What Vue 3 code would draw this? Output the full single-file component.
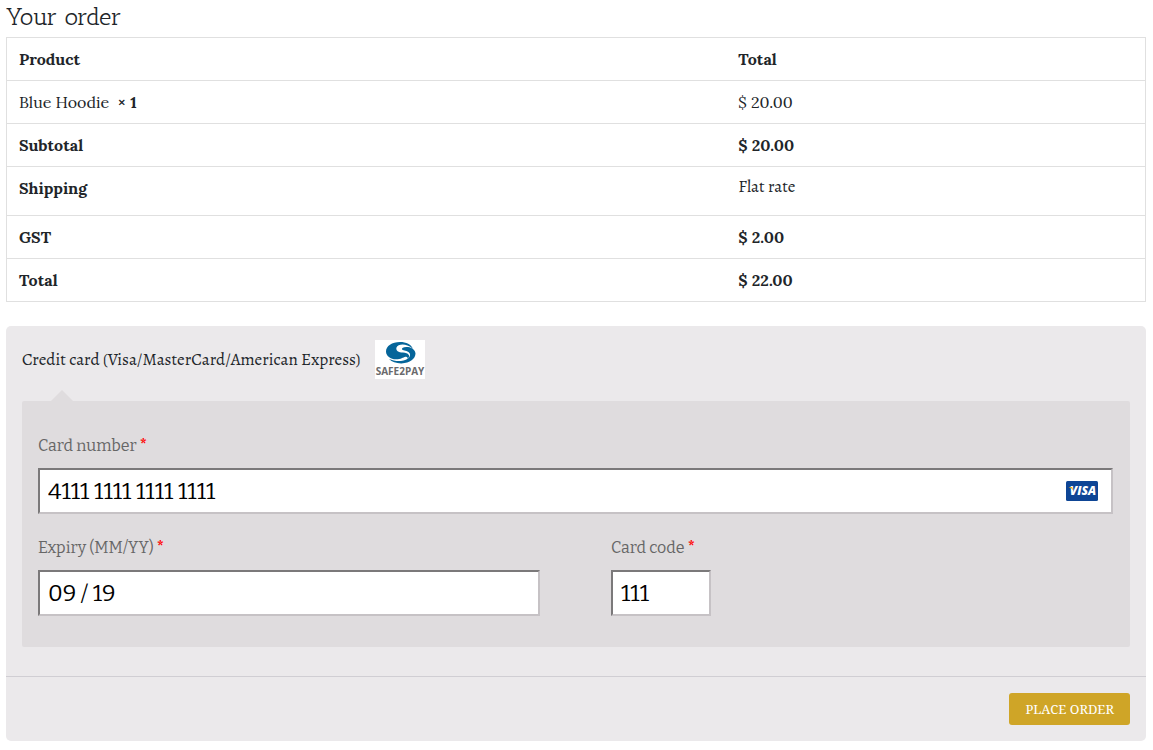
<script setup>
import { ref } from 'vue'

const rows = [
  { label: 'Subtotal', value: '$ 20.00' },
  { label: 'Shipping', value: 'Flat rate', kind: 'shipping' },
  { label: 'GST', value: '$ 2.00' },
  { label: 'Total', value: '$ 22.00' },
]

const cardNumber = ref('4111 1111 1111 1111')
const expiry = ref('09 / 19')
const cardCode = ref('111')
</script>

<template>
  <main class="checkout">
    <h1 class="title">Your order</h1>

    <table class="order">
      <thead>
        <tr>
          <th class="name" scope="col">Product</th>
          <th scope="col">Total</th>
        </tr>
      </thead>
      <tbody>
        <tr>
          <td>Blue Hoodie&nbsp; <strong>×&nbsp;1</strong></td>
          <td>$ 20.00</td>
        </tr>
      </tbody>
      <tfoot>
        <tr v-for="row in rows" :key="row.label" :class="row.kind">
          <th scope="row">{{ row.label }}</th>
          <td>{{ row.value }}</td>
        </tr>
      </tfoot>
    </table>

    <form class="payment" @submit.prevent>
      <div class="method">
        <span>Credit card (Visa/MasterCard/American Express)</span>
        <svg class="safe" viewBox="0 0 50 39" role="img" aria-label="Safe2Pay">
          <rect width="50" height="39" fill="#fff" />
          <path d="M38 9C36.500 4.500 31 2 25 2C17 2 11 6 11 11.500C11 16 15.500 19.300 21 19.300C26 19.300 28 17.500 30.500 16.800C32 16.500 33 17.500 32.500 19C36 16 33.500 12.800 28 12.600C23.500 12.500 20.500 10.500 21.500 7.500C22.500 4.500 28 3.500 32.500 5.500C35 6.500 36.500 7.500 38 9Z" fill="#05659a" />
          <path d="M14 19C17 22 21.500 23.500 26.500 23.400C35 23.200 40.500 18.500 40.500 13.500C40.500 10.500 37 7.500 33 7C29 6.500 26.500 7.700 27 9.200C27.500 10.500 31 10.300 33.500 12C37.500 15 33.500 20.500 26 21C21.500 21.300 17.500 20.500 14 19Z" fill="#05659a" />
          <text class="safe-text" x="25" y="35" text-anchor="middle">SAFE2PAY</text>
        </svg>
      </div>

      <div class="card-box">
        <div class="field">
          <label for="number">Card number <b>*</b></label>
          <div class="number-wrap">
            <input id="number" v-model="cardNumber" type="text" inputmode="numeric" />
            <svg class="visa" viewBox="0 0 32 20" role="img" aria-label="Visa">
              <rect width="32" height="20" rx="1.5" fill="#0e4595" />
              <text class="visa-text" x="17" y="14" text-anchor="middle">VISA</text>
              <path d="M2.500 6H6L7.500 9.500Q6 7 2.500 6Z" fill="#f2ae14" />
            </svg>
          </div>
        </div>
        <div class="pair">
          <div class="field">
            <label for="expiry">Expiry (MM/YY) <b>*</b></label>
            <input id="expiry" v-model="expiry" type="text" />
          </div>
          <div class="field">
            <label for="code">Card code <b>*</b></label>
            <input id="code" v-model="cardCode" class="code" type="text" />
          </div>
        </div>
      </div>

      <div class="actions">
        <button type="submit">PLACE ORDER</button>
      </div>
    </form>
  </main>
</template>

<style>
body {
  margin: 0;
  background: #fff;
}
</style>

<style scoped>
* {
  box-sizing: border-box;
}
.checkout {
  padding: 5px 7px 9px 6px;
  font-family: Lora, "Liberation Serif", serif;
  font-size: 16px;
  line-height: 24px;
  color: #212529;
}
.title {
  margin: 0 0 8px;
  font-family: "Antic Slab", "DejaVu Serif", serif;
  font-size: 24px;
  line-height: 24px;
  font-weight: 400;
}
.order {
  width: 100%;
  border-collapse: separate;
  border-spacing: 0;
  border: 1px solid #e0e0e0;
  border-top: 0;
  table-layout: fixed;
}
.order th,
.order td {
  padding: 9px 12px;
  border-top: 1px solid #e0e0e0;
  text-align: left;
  vertical-align: top;
}
.order .name {
  width: 63.2%;
}
.order tfoot td {
  font-weight: 700;
}
.order .shipping td {
  padding: 8px 12px 16px;
  font-family: Alegreya, "Liberation Serif", serif;
  font-size: 17px;
  font-weight: 400;
}
.payment {
  margin-top: 24px;
  background: #ebe9eb;
  border-radius: 5px;
  font-family: Alegreya, "Liberation Serif", serif;
  font-size: 17px;
}
.method {
  display: flex;
  align-items: center;
  gap: 14px;
  padding: 14px 16px 0;
}
.safe {
  width: 50px;
  height: 39px;
}
.safe-text {
  font: 700 10px "Open Sans", sans-serif;
  fill: #6a6a6c;
}
.card-box {
  position: relative;
  margin: 22px 16px 0;
  padding: 33px 17px 31px 16px;
  background: #dfdcde;
  border-radius: 2px;
  color: #666;
}
.card-box::before {
  content: "";
  position: absolute;
  left: 29px;
  top: -11px;
  border: 11px solid transparent;
  border-top: 0;
  border-bottom-color: #dfdcde;
}
.field label {
  display: block;
  margin-bottom: 10px;
  font-family: Bitter, "Liberation Serif", serif;
  font-size: 16px;
  line-height: 24px;
}
.field b {
  color: #f00;
}
.number-wrap {
  position: relative;
}
.visa {
  position: absolute;
  right: 15px;
  top: 13px;
  width: 32px;
  height: 20px;
}
.visa-text {
  font: italic 800 12px "Open Sans", sans-serif;
  fill: #fff;
}
input {
  display: block;
  width: 100%;
  height: 46px;
  padding: 0 8px;
  border: 2px solid;
  border-color: #7b797a #c6c2c5 #c6c2c5 #7b797a;
  border-radius: 0;
  background: #fff;
  color: #000;
  font-family: Bitter, Inter, sans-serif;
  font-size: 23px;
  font-weight: 400;
}
input.code {
  width: 100px;
}
.pair {
  display: grid;
  grid-template-columns: 1fr 1fr;
  gap: 71px;
  margin-top: 22px;
}
.actions {
  display: flex;
  justify-content: flex-end;
  margin-top: 29px;
  padding: 16px;
  border-top: 1px solid #d0ced3;
}
button {
  height: 32px;
  padding: 0 16px;
  border: 0;
  border-radius: 3px;
  background: #cfa527;
  color: #fff;
  font-family: "Noto Serif", "Liberation Serif", serif;
  font-size: 13px;
}
</style>
